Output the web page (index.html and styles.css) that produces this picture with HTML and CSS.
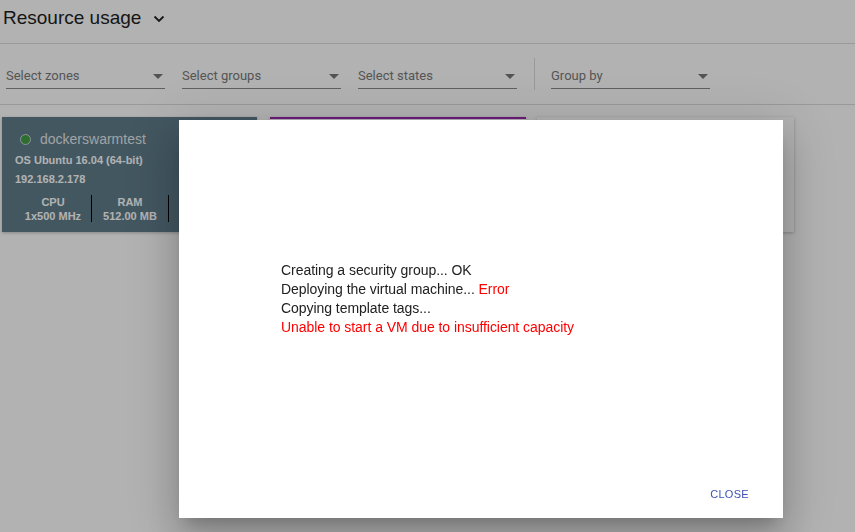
FILE: index.html
```html
<!DOCTYPE html>
<html>
<head>
<meta charset="utf-8">
<link rel="stylesheet" href="styles.css">
</head>
<body>
<div class="page">
  <header class="title-bar">
    <h1 class="title">Resource usage</h1>
    <svg class="chevron" width="12" height="8" viewBox="0 0 12 8"><path d="M1.5 1.5 L6 6 L10.5 1.5" fill="none" stroke="#222" stroke-width="1.8"/></svg>
  </header>
  <div class="filters">
    <div class="select"><span>Select zones</span><i class="caret"></i></div>
    <div class="select"><span>Select groups</span><i class="caret"></i></div>
    <div class="select"><span>Select states</span><i class="caret"></i></div>
    <div class="vdivider"></div>
    <div class="select"><span>Group by</span><i class="caret"></i></div>
  </div>
  <div class="cards">
    <div class="card card-vm">
      <div class="vm-name"><span class="dot"></span>dockerswarmtest</div>
      <div class="vm-line">OS Ubuntu 16.04 (64-bit)</div>
      <div class="vm-line">192.168.2.178</div>
      <div class="stats">
        <div class="stat"><div>CPU</div><div>1x500 MHz</div></div>
        <div class="stat"><div>RAM</div><div>512.00 MB</div></div>
      </div>
    </div>
    <div class="card card-purple"></div>
    <div class="card card-white"></div>
  </div>
</div>
<div class="backdrop"></div>
<div class="dialog">
  <div class="dialog-body">
    <div>Creating a security group... OK</div>
    <div>Deploying the virtual machine... <span class="err">Error</span></div>
    <div>Copying template tags...</div>
    <div class="err">Unable to start a VM due to insufficient capacity</div>
  </div>
  <div class="dialog-actions"><button class="btn">CLOSE</button></div>
</div>
</body>
</html>
```
FILE: styles.css
```css
html, body { margin: 0; padding: 0; }
body { background: #fff; font-family: "Liberation Sans", Arial, sans-serif; width: 855px; height: 532px; overflow: hidden; }
.page { width: 855px; }
.title-bar { height: 44px; border-bottom: 1px solid #dcdcdc; display: flex; align-items: center; box-sizing: border-box; padding-left: 3px; }
.title { margin: 0; font-weight: normal; font-size: 19px; color: #222; font-family: "Liberation Sans", Arial, sans-serif; position: relative; top: -4px; }
.chevron { margin-left: 12px; position: relative; top: -3px; }
.filters { height: 61px; border-bottom: 1px solid #dcdcdc; box-sizing: border-box; display: flex; align-items: center; padding-left: 6px; gap: 17px; }
.select { width: 159px; height: 25px; border-bottom: 1px solid #8a8a8a; display: flex; align-items: center; justify-content: space-between; box-sizing: border-box; font-family: Roboto, "Liberation Sans", sans-serif; font-size: 13px; color: #7a7a7a; position: relative; top: 2px; }
.select span { position: relative; top: 0; }
.caret { width: 0; height: 0; border-left: 5px solid transparent; border-right: 5px solid transparent; border-top: 5px solid #777; margin-right: 2px; position: relative; top: 1px; }
.vdivider { width: 1px; height: 32px; background: #dcdcdc; margin-right: -1px; }
.cards { display: flex; gap: 13px; padding: 12px 0 0 2px; }
.card { height: 115px; box-sizing: border-box; box-shadow: 0 1px 3px rgba(0,0,0,.25); }
.card-vm { width: 255px; background: #607d8b; color: #fff; padding: 12px 0 0 13px; }
.card-purple { width: 256px; background: #fff; border-top: 2px solid #9c27b0; }
.card-white { width: 257px; background: #fff; margin-left: -2px; }
.vm-name { display: flex; align-items: center; font-size: 14px; color: rgba(255,255,255,.85); margin-left: 5px; height: 20px; }
.dot { width: 9px; height: 9px; border-radius: 50%; background: #43a047; border: 1px solid #c8d2d6; margin-right: 9px; }
.vm-line { font-size: 11px; font-weight: bold; margin-top: 3px; height: 16px; line-height: 16px; color: #fff; }
.stats { display: flex; margin-top: 8px; }
.stat { width: 77px; border-right: 1px solid #000; text-align: center; font-size: 11px; font-weight: bold; height: 27px; display: flex; flex-direction: column; justify-content: space-between; padding-top: 1px; box-sizing: border-box; }
.stat div { line-height: 12px; }
.backdrop { position: fixed; inset: 0; background: rgba(0,0,0,.3); }
.dialog { position: absolute; left: 179px; top: 120px; width: 604px; height: 398px; background: #fff; box-shadow: 0 11px 15px -7px rgba(0,0,0,.2), 0 24px 38px 3px rgba(0,0,0,.14), 0 9px 46px 8px rgba(0,0,0,.12); display: flex; flex-direction: column; box-sizing: border-box; }
.dialog-body { padding: 141px 0 0 102px; font-size: 14px; color: #212121; line-height: 19px; flex: 1; letter-spacing: -0.05px; }
.err { color: #f00; }
.dialog-actions { display: flex; justify-content: flex-end; padding: 0 26px 14px 0; }
.btn { border: none; background: none; font-family: "Liberation Sans", Arial, sans-serif; font-size: 11px; color: #3f51b5; letter-spacing: 0.3px; padding: 0 8px; height: 20px; }
```
